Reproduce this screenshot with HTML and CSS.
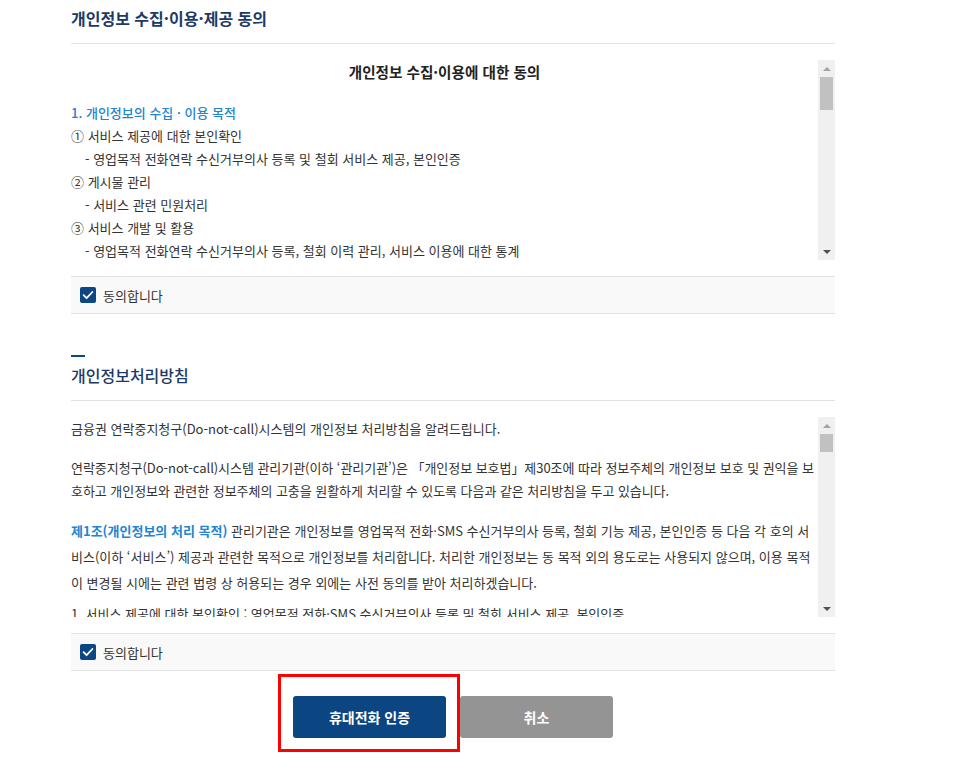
FILE: index.html
```html
<!DOCTYPE html>
<html lang="ko">
<head>
<meta charset="utf-8">
<title>개인정보 수집·이용·제공 동의</title>
<link rel="stylesheet" href="styles.css">
</head>
<body>
<div class="wrap">
  <section class="sec">
    <h2 class="sec-title sec-title--bold">개인정보 수집·이용·제공 동의</h2>
    <div class="scroll">
      <div class="scroll-body">
        <h3 class="doc-title">개인정보 수집·이용에 대한 동의</h3>
        <p class="hd">1. 개인정보의 수집 · 이용 목적</p>
        <p>① 서비스 제공에 대한 본인확인</p>
        <p class="ind">- 영업목적 전화연락 수신거부의사 등록 및 철회 서비스 제공, 본인인증</p>
        <p>② 게시물 관리</p>
        <p class="ind">- 서비스 관련 민원처리</p>
        <p>③ 서비스 개발 및 활용</p>
        <p class="ind">- 영업목적 전화연락 수신거부의사 등록, 철회 이력 관리, 서비스 이용에 대한 통계</p>
        <p class="hd">2. 수집 · 이용하는 개인정보의 항목</p>
        <p>① 필수항목</p>
        <p class="ind">- 성명, 생년월일, 성별, 휴대전화번호, 통신사, 내·외국인 구분</p>
      </div>
      <div class="sbar" aria-hidden="true">
        <span class="sbar-btn"><i class="arr arr--up"></i></span>
        <span class="sbar-track"><span class="sbar-thumb sbar-thumb--a"></span></span>
        <span class="sbar-btn"><i class="arr arr--down"></i></span>
      </div>
    </div>
    <label class="agree">
      <span class="chk"><svg viewBox="0 0 16 16" width="16" height="16"><path d="M3.6 8.2l3 3 5.8-6.2" fill="none" stroke="#fff" stroke-width="1.8" stroke-linecap="round" stroke-linejoin="round"/></svg></span>
      <span class="agree-txt">동의합니다</span>
    </label>
  </section>

  <section class="sec sec--second">
    <span class="bar"></span>
    <h2 class="sec-title">개인정보처리방침</h2>
    <div class="scroll">
      <div class="scroll-body">
        <p class="para">금융권 연락중지청구(Do-not-call)시스템의 개인정보 처리방침을 알려드립니다.</p>
        <p class="para para--fit">연락중지청구(Do-not-call)시스템 관리기관(이하 ‘관리기관’)은 「개인정보 보호법」제30조에 따라 정보주체의 개인정보 보호 및 권익을 보호하고 개인정보와 관련한 정보주체의 고충을 원활하게 처리할 수 있도록 다음과 같은 처리방침을 두고 있습니다.</p>
        <div class="article">
          <p class="art-body"><strong class="art">제1조(개인정보의 처리 목적)</strong> 관리기관은 개인정보를 영업목적 전화·SMS 수신거부의사 등록, 철회 기능 제공, 본인인증 등 다음 각 호의 서비스(이하 ‘서비스’) 제공과 관련한 목적으로 개인정보를 처리합니다. 처리한 개인정보는 동 목적 외의 용도로는 사용되지 않으며, 이용 목적이 변경될 시에는 관련 법령 상 허용되는 경우 외에는 사전 동의를 받아 처리하겠습니다.</p>
          <p class="item">1. 서비스 제공에 대한 본인확인 : 영업목적 전화·SMS 수신거부의사 등록 및 철회 서비스 제공, 본인인증</p>
          <p class="item">2. 게시물 관리 : 서비스 관련 민원처리</p>
        </div>
      </div>
      <div class="sbar" aria-hidden="true">
        <span class="sbar-btn"><i class="arr arr--up"></i></span>
        <span class="sbar-track"><span class="sbar-thumb sbar-thumb--b"></span></span>
        <span class="sbar-btn"><i class="arr arr--down"></i></span>
      </div>
    </div>
    <label class="agree">
      <span class="chk"><svg viewBox="0 0 16 16" width="16" height="16"><path d="M3.6 8.2l3 3 5.8-6.2" fill="none" stroke="#fff" stroke-width="1.8" stroke-linecap="round" stroke-linejoin="round"/></svg></span>
      <span class="agree-txt">동의합니다</span>
    </label>
  </section>

  <div class="btns">
    <span class="btn-mark"><button type="button" class="btn btn--primary">휴대전화 인증</button></span>
    <button type="button" class="btn btn--gray">취소</button>
  </div>
</div>
</body>
</html>
```

FILE: styles.css
```css
* { box-sizing: border-box; }
html, body { margin: 0; padding: 0; background: #fff; }
body {
  font-family: "Noto Sans CJK KR", "Noto Sans", sans-serif;
  color: #333;
  font-size: 13px;
}
.wrap {
  width: 764px;
  margin-left: 71px;
  padding-top: 6px;
  padding-bottom: 39px;
}
.sec-title {
  margin: 0;
  font-size: 16px;
  line-height: 24px;
  font-weight: 500;
  color: #1c3a66;
  padding-bottom: 13px;
  border-bottom: 1px solid #e2e2e2;
}
.sec-title--bold { font-weight: 700; }
.sec--second { margin-top: 41px; }
.bar {
  display: block;
  width: 14px;
  height: 2px;
  background: #0d4682;
  margin-bottom: 6px;
}

/* scroll box */
.scroll {
  margin-top: 16px;
  height: 200px;
  display: flex;
}
.scroll-body {
  flex: 1;
  min-width: 0;
  overflow-y: auto;
  scrollbar-width: none;
  color: #333;
}
.scroll-body p { margin: 0; line-height: 23px; }
.doc-title {
  margin: 0 0 18px;
  text-align: center;
  font-size: 14.6px;
  line-height: 23px;
  font-weight: 700;
  color: #222;
}
.scroll-body .hd { color: #2185cf; font-weight: 500; }
.scroll-body .ind { padding-left: 14px; }
.scroll-body .para { margin-bottom: 16px; }
.scroll-body .para--fit { letter-spacing: -0.05px; }
.article p { line-height: 26px; }
.article .item { margin-top: 5px; }
.art { color: #2185cf; font-weight: 700; }

/* scrollbar drawing */
.sbar {
  width: 17px;
  flex: none;
  background: #f0f0f0;
  display: flex;
  flex-direction: column;
}
.sbar-btn {
  height: 17px;
  flex: none;
  display: flex;
  align-items: center;
  justify-content: center;
}
.arr {
  width: 0;
  height: 0;
  border-left: 4px solid transparent;
  border-right: 4px solid transparent;
}
.arr--up { border-bottom: 4px solid #a3a3a3; }
.arr--down { border-top: 4px solid #505050; }
.sbar-track { flex: 1; padding: 0 2px; }
.sbar-thumb { display: block; background: #c1c1c1; }
.sbar-thumb--a { height: 33px; }
.sbar-thumb--b { height: 18px; }

/* agree row */
.agree {
  margin-top: 16px;
  display: flex;
  align-items: center;
  gap: 7px;
  height: 38px;
  padding-left: 9px;
  background: #f9f9f9;
  border-top: 1px solid #e1e1e1;
  border-bottom: 1px solid #e1e1e1;
  cursor: pointer;
}
.chk {
  width: 16px;
  height: 16px;
  border-radius: 2px;
  background: #0d4682;
  display: flex;
}
.agree-txt { font-size: 13px; color: #333; }

/* buttons */
.btns {
  margin-top: 25px;
  display: flex;
  justify-content: center;
  gap: 14px;
}
.btn-mark { position: relative; display: flex; }
.btn-mark::before {
  content: "";
  position: absolute;
  top: -22px; bottom: -14px; left: -15px; right: -14px;
  border: 3px solid #ff0000;
  pointer-events: none;
}
.btn {
  width: 153px;
  height: 42px;
  border: 0;
  border-radius: 3px;
  font-family: "Noto Sans CJK KR", "Noto Sans", sans-serif;
  font-size: 14px;
  font-weight: 700;
  color: #fff;
  cursor: pointer;
}
.btn--primary { background: #0b4682; }
.btn--gray { background: #949494; }
```
